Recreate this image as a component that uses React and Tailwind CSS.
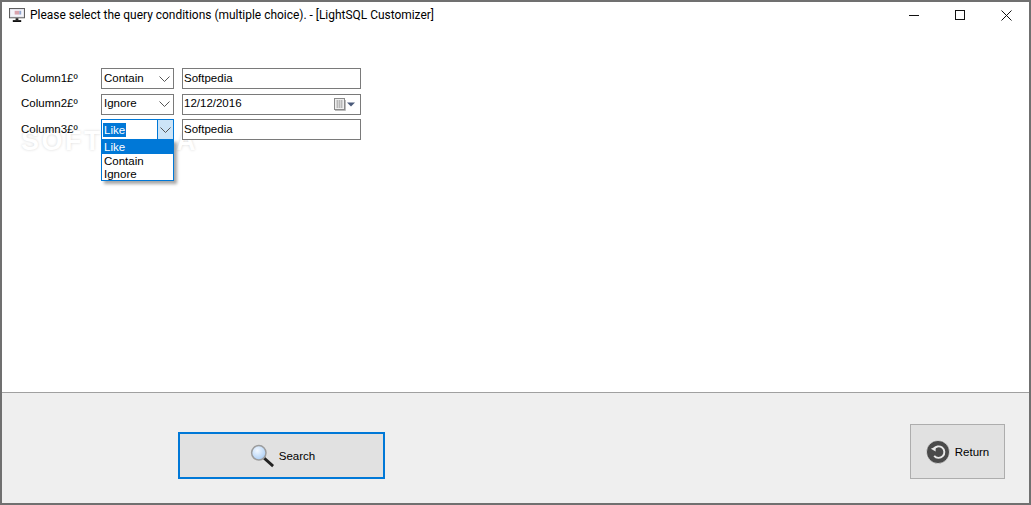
const Chevron = () => (
    <svg width="11" height="6" viewBox="0 0 11 6" fill="none" stroke="#555" strokeWidth="1">
        <path d="M0.5 0.5L5.5 5.5L10.5 0.5" />
    </svg>
);

const Combo = ({ value }) => (
    <div className="w-[73px] h-[21px] border border-[#7a7a7a] bg-white flex items-center justify-between pl-[2px] pr-[3px] box-border">
        <span className="leading-none">{value}</span>
        <Chevron />
    </div>
);

const TextBox = ({ value }) => (
    <div className="w-[179px] h-[21px] border border-[#7a7a7a] bg-white flex items-center pl-[1px] box-border">
        <span className="leading-none">{value}</span>
    </div>
);

const Label = ({ children }) => <div className="w-[80px] leading-none">{children}</div>;

const App = () => {
    return (
        <div className="w-[1031px] h-[505px] bg-white border-2 border-[#707070] box-border flex flex-col overflow-hidden relative text-[11.5px] text-black font-['Liberation_Sans',sans-serif]">
            {/* Title bar */}
            <div className="h-[26px] flex items-center shrink-0">
                <svg className="ml-[7px]" width="16" height="14" viewBox="0 0 17 15">
                    <rect x="0.5" y="0.5" width="16" height="10" fill="#e4e4ec" stroke="#555" />
                    <rect x="2" y="2" width="13" height="7" fill="#f4f4fa" />
                    <rect x="6" y="3" width="5" height="4" fill="#d9a3ad" />
                    <rect x="11" y="3" width="2" height="4" fill="#8fa6cf" />
                    <rect x="7" y="11" width="3" height="2" fill="#222" />
                    <rect x="4" y="13" width="9" height="2" fill="#111" />
                </svg>
                <span className="ml-[5px] mt-[2px] text-[11.95px] font-['Roboto',sans-serif]">Please select the query conditions (multiple choice). - [LightSQL Customizer]</span>
                <div className="ml-auto flex items-center h-full pr-[17px] gap-[36px]">
                    <svg width="10" height="10" viewBox="0 0 10 10" stroke="#111" fill="none">
                        <path d="M0 5.5H10" />
                    </svg>
                    <svg width="10" height="10" viewBox="0 0 10 10" stroke="#111" fill="none">
                        <rect x="0.5" y="0.5" width="9" height="9" />
                    </svg>
                    <svg width="11" height="11" viewBox="0 0 11 11" stroke="#111" fill="none">
                        <path d="M0.5 0.5L10.5 10.5M10.5 0.5L0.5 10.5" />
                    </svg>
                </div>
            </div>

            {/* Form rows */}
            <div className="flex-1 pt-[40px] pl-[19px] relative">
                {/* Softpedia watermark */}
                <div className="absolute left-[19px] top-[100px] text-[27px] font-bold tracking-[2.5px] text-white leading-none [text-shadow:0_0_3px_rgba(0,0,0,0.16)]">
                    SOFTPEDIA
                </div>
                <div className="flex flex-col gap-[4.5px] relative">
                    <div className="flex items-center">
                        <Label>Column1£º</Label>
                        <Combo value="Contain" />
                        <div className="w-[8px]" />
                        <TextBox value="Softpedia" />
                    </div>
                    <div className="flex items-center">
                        <Label>Column2£º</Label>
                        <Combo value="Ignore" />
                        <div className="w-[8px]" />
                        <div className="w-[179px] h-[21px] border border-[#7a7a7a] bg-white flex items-center pl-[1px] box-border">
                            <span className="leading-none">12/12/2016</span>
                            <svg className="ml-auto mr-[3px]" width="23" height="13" viewBox="0 0 23 13">
                                <rect x="0.5" y="0.5" width="10" height="11" fill="#eeeeee" stroke="#8a8a8a" />
                                <path d="M2 3H9M2 5H9M2 7H9M2 9H9M3.5 2V10M5.5 2V10M7.5 2V10" stroke="#b0b0b0" strokeWidth="0.8" />
                                <path d="M1 12.5H11.5V2" stroke="#bbb" fill="none" />
                                <path d="M13 4.5H21L17 8.5Z" fill="#4a5a7a" />
                            </svg>
                        </div>
                    </div>
                    <div className="flex items-center relative">
                        <Label>Column3£º</Label>
                        <div className="w-[73px] h-[21px] border border-[#0078d7] bg-white flex items-stretch box-border">
                            <div className="flex-1 flex items-center pl-[1px]">
                                <span className="bg-[#0078d7] text-white leading-[14px] px-[1px]">Like</span>
                            </div>
                            <div className="w-[16px] bg-[#cce4f7] border-l border-[#0078d7] flex items-center justify-center">
                                <Chevron />
                            </div>
                        </div>
                        <div className="w-[8px]" />
                        <TextBox value="Softpedia" />
                        {/* Dropdown list */}
                        <div className="absolute left-[80px] top-[20px] w-[73px] h-[42px] border border-[#0078d7] bg-white shadow-[3px_3px_3px_rgba(0,0,0,0.35)] box-border leading-[15px]">
                            <div className="bg-[#0078d7] text-white pl-[2px] h-[14px]">Like</div>
                            <div className="pl-[2px] h-[13px]">Contain</div>
                            <div className="pl-[2px] h-[13px]">Ignore</div>
                        </div>
                    </div>
                </div>
            </div>

            {/* Bottom panel */}
            <div className="h-[111px] shrink-0 bg-[#efefef] border-t border-[#a0a0a0] flex items-start pt-[39px] pl-[176px] pr-[24px] justify-between">
                <button className="w-[207px] h-[47px] bg-[#e1e1e1] border-2 border-[#0078d7] box-border flex items-center justify-center pl-[2px]">
                    <svg width="25" height="24" viewBox="0 0 27 26">
                        <defs>
                            <radialGradient id="lens" cx="0.4" cy="0.35" r="0.7">
                                <stop offset="0" stopColor="#f2f8ff" />
                                <stop offset="1" stopColor="#a9cdf5" />
                            </radialGradient>
                        </defs>
                        <path d="M15 15L25 24" stroke="#222" strokeWidth="3" />
                        <circle cx="9.5" cy="9.5" r="7.8" fill="url(#lens)" stroke="#9c9c9c" strokeWidth="1.6" />
                    </svg>
                    <span className="ml-[4px] mt-[2px]">Search</span>
                </button>
                <button className="w-[95px] h-[55px] mt-[-8px] bg-[#e1e1e1] border border-[#adadad] box-border flex items-center justify-center">
                    <svg width="24" height="24" viewBox="0 0 25 25">
                        <circle cx="12.5" cy="12.5" r="12" fill="#4a4a4a" stroke="#fff" strokeWidth="0.6" />
                        <path d="M8 9.5A6 6 0 1 1 8.5 16.5" fill="none" stroke="#e8e8e8" strokeWidth="2" />
                        <path d="M5 9L10 7V12Z" fill="#e8e8e8" />
                    </svg>
                    <span className="ml-[5px] mt-[2px]">Return</span>
                </button>
            </div>
        </div>
    );
};

export default App;
